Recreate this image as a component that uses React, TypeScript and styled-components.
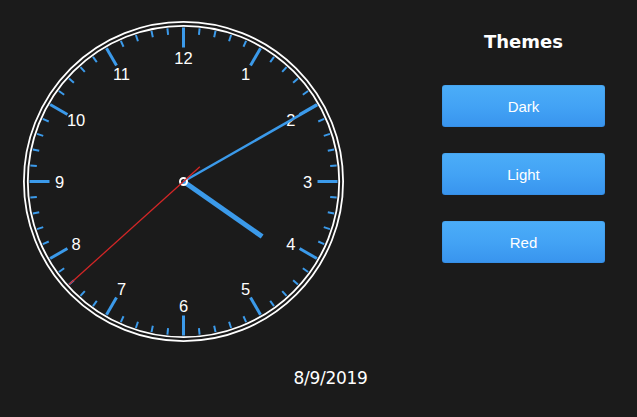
import React from "react";
import styled, { createGlobalStyle } from "styled-components";

const GlobalStyle = createGlobalStyle`
  html, body {
    margin: 0;
    padding: 0;
    background: #1b1b1b;
  }
  #root {
    min-height: 100vh;
  }
`;

const Page = styled.div`
  display: flex;
  flex-direction: column;
  width: 637px;
  height: 417px;
  background: #1b1b1b;
  color: #ffffff;
  overflow: hidden;
`;

const TopRow = styled.div`
  display: flex;
  align-items: flex-start;
`;

const ClockFace = styled.svg`
  display: block;
  width: 323px;
  height: 323px;
  margin: 20px 0 0 22px;
  flex: none;
`;

const Panel = styled.div`
  display: flex;
  flex-direction: column;
  align-items: center;
  width: 163px;
  margin: 31px 32px 0 auto;
`;

const Title = styled.h2`
  margin: 0 0 32px;
  font-family: "DejaVu Sans", Verdana, sans-serif;
  font-weight: bold;
  font-size: 18px;
  line-height: 22px;
  color: #ffffff;
`;

const ThemeList = styled.div`
  display: flex;
  flex-direction: column;
  gap: 26px;
  width: 100%;
`;

const ThemeButton = styled.button`
  display: flex;
  align-items: center;
  justify-content: center;
  width: 163px;
  height: 42px;
  padding: 0;
  border: none;
  border-radius: 3px;
  background: linear-gradient(to bottom, #4badf8 0%, #43a3f5 50%, #3894ee 100%);
  box-shadow: inset 0 0 1px rgba(20, 60, 110, 0.6);
  color: #ffffff;
  font-family: "Liberation Sans", Arial, sans-serif;
  font-size: 15px;
  cursor: pointer;
`;

const DateRow = styled.div`
  margin-top: 25px;
  padding-left: 24px;
  text-align: center;
  font-family: "DejaVu Sans", Verdana, sans-serif;
  font-size: 17px;
  letter-spacing: -0.3px;
  line-height: 20px;
  color: #ffffff;
`;

const C = 161.5;
const BLUE = "#3b9aea";

function polar(angleDeg: number, r: number): [number, number] {
  const a = (angleDeg * Math.PI) / 180;
  return [C + r * Math.sin(a), C - r * Math.cos(a)];
}

function Clock() {
  const ticks = [];
  for (let i = 0; i < 60; i++) {
    const isHour = i % 5 === 0;
    const [x1, y1] = polar(i * 6, isHour ? 134 : 147.5);
    const [x2, y2] = polar(i * 6, 154);
    ticks.push(
      <line
        key={i}
        x1={x1}
        y1={y1}
        x2={x2}
        y2={y2}
        stroke={BLUE}
        strokeWidth={isHour ? 3 : 2}
      />
    );
  }
  const numbers = [];
  for (let h = 1; h <= 12; h++) {
    const [x, y] = polar(h * 30, 124);
    numbers.push(
      <text
        key={h}
        x={x}
        y={y}
        fill="#ffffff"
        fontFamily="'Liberation Sans', Arial, sans-serif"
        fontSize="16.5"
        textAnchor="middle"
        dominantBaseline="central"
      >
        {h}
      </text>
    );
  }
  const [hx, hy] = polar(125, 96);
  const [mx, my] = polar(60.3, 154);
  const [sx, sy] = polar(228, 154);
  const [tx, ty] = polar(48, 22);
  return (
    <ClockFace viewBox="0 0 323 323">
      <circle cx={C} cy={C} r={159.6} fill="none" stroke="#ffffff" strokeWidth={1.8} />
      <circle cx={C} cy={C} r={155.7} fill="none" stroke="#ffffff" strokeWidth={1.8} />
      {ticks}
      {numbers}
      <line x1={C} y1={C} x2={hx} y2={hy} stroke={BLUE} strokeWidth={5} />
      <line x1={C} y1={C} x2={mx} y2={my} stroke={BLUE} strokeWidth={2.5} />
      <circle cx={C} cy={C} r={3.5} fill="none" stroke="#ffffff" strokeWidth={2} />
      <line x1={tx} y1={ty} x2={sx} y2={sy} stroke="#d22626" strokeWidth={1.3} />
    </ClockFace>
  );
}

export default function App() {
  const themes = ["Dark", "Light", "Red"];
  return (
    <>
      <GlobalStyle />
      <Page>
        <TopRow>
          <Clock />
          <Panel>
            <Title>Themes</Title>
            <ThemeList>
              {themes.map((t) => (
                <ThemeButton key={t}>{t}</ThemeButton>
              ))}
            </ThemeList>
          </Panel>
        </TopRow>
        <DateRow>8/9/2019</DateRow>
      </Page>
    </>
  );
}
